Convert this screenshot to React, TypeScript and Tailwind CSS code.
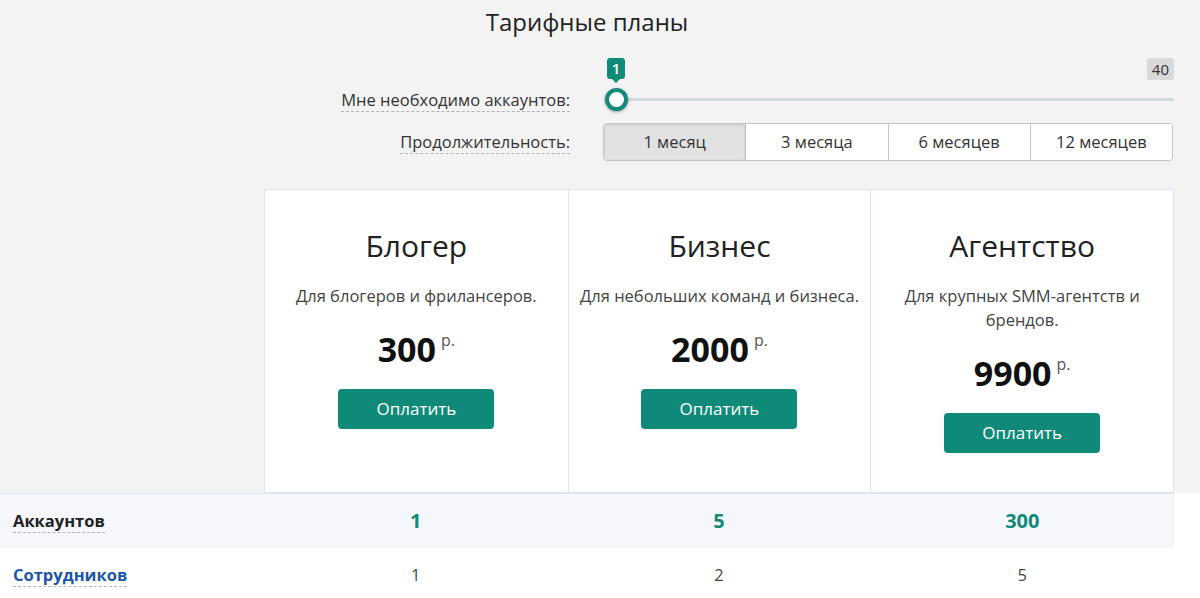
import { useState } from 'react'

const plans = [
  { name: 'Блогер', desc: 'Для блогеров и фрилансеров.', price: '300' },
  { name: 'Бизнес', desc: 'Для небольших команд и бизнеса.', price: '2000' },
  { name: 'Агентство', desc: 'Для крупных SMM-агентств и брендов.', price: '9900' },
]

const periods = ['1 месяц', '3 месяца', '6 месяцев', '12 месяцев']

const rows = [
  { label: 'Аккаунтов', values: ['1', '5', '300'], highlight: true },
  { label: 'Сотрудников', values: ['1', '2', '5'], highlight: false },
]

export default function App() {
  const [period, setPeriod] = useState(0)

  return (
    <div className="min-h-screen bg-white text-[#333] font-['Open_Sans',sans-serif]">
      {/* top section */}
      <div className="bg-[#f3f3f3] h-[493px]">
        <div className="w-[1174px]">
          <h1 className="pt-[6px] h-[38px] text-center text-[24px] leading-8 font-normal text-[#222]">
            Тарифные планы
          </h1>

          {/* accounts slider */}
          <div className="mt-[14px] flex h-[58px]">
            <div className="w-[570px] text-right pt-[36px]">
              <span className="text-[16.5px] leading-[21px] border-b border-dashed border-[#b5b5b5]">
                Мне необходимо аккаунтов:
              </span>
            </div>
            <div className="relative ml-[34px] w-[570px]">
              <div className="absolute left-0 right-0 top-[46px] h-[3px] rounded-full bg-[#d3d9e0]" />
              <div className="absolute left-[3px] top-[6px] flex flex-col items-center">
                <div className="w-[18px] h-[21px] rounded-[3px] bg-[#128a78] text-white text-[15px] font-semibold leading-[21px] text-center">
                  1
                </div>
                <div className="w-0 h-0 border-l-[4px] border-r-[4px] border-t-[4px] border-l-transparent border-r-transparent border-t-[#128a78]" />
              </div>
              <div className="absolute left-[1px] top-[36px] w-[23px] h-[23px] rounded-full bg-white border-[4px] border-[#128a78] shadow-[0_1px_3px_rgba(0,0,0,0.35)]" />
              <div className="absolute right-0 top-[6px] h-[22px] px-[5px] rounded-[3px] bg-[#d9d9d9] text-[15px] leading-[22px] text-[#333]">
                40
              </div>
            </div>
          </div>

          {/* duration */}
          <div className="mt-[13px] flex items-center">
            <div className="w-[570px] text-right">
              <span className="text-[16.5px] leading-[21px] border-b border-dashed border-[#b5b5b5]">
                Продолжительность:
              </span>
            </div>
            <div className="ml-[33px] w-[570px] h-[38px] flex rounded-[4px] border border-[#c4c4c4] bg-white overflow-hidden">
              {periods.map((p, i) => (
                <button
                  key={p}
                  onClick={() => setPeriod(i)}
                  className={`flex-1 text-[16.5px] text-[#333] ${i > 0 ? 'border-l border-[#c4c4c4]' : ''} ${
                    period === i ? 'bg-[#e2e2e2] shadow-[inset_0_1px_3px_rgba(0,0,0,0.12)]' : 'bg-white'
                  }`}
                >
                  {p}
                </button>
              ))}
            </div>
          </div>

          {/* plan cards */}
          <div className="mt-[28px] ml-[264px] w-[910px] h-[304px] grid grid-cols-3 border border-[#d8e6f3] bg-white">
            {plans.map((plan, i) => (
              <div
                key={plan.name}
                className={`flex flex-col items-center px-[10px] pt-[36px] text-center ${i > 0 ? 'border-l border-[#d8e6f3]' : ''}`}
              >
                <h2 className="text-[30px] leading-[40px] text-[#222] font-normal">{plan.name}</h2>
                <p className="mt-[18px] text-[16.5px] leading-[24px] text-[#444]">{plan.desc}</p>
                <div className="mt-[21px] flex items-start h-[40px]">
                  <span className="text-[34px] leading-[40px] font-bold text-[#111]">{plan.price}</span>
                  <span className="ml-[5px] mt-[1px] text-[16px] leading-[20px] text-[#555]">р.</span>
                </div>
                <button className="mt-[20px] w-[156px] h-[40px] rounded-[4px] bg-[#0f8a78] text-white text-[17px]">
                  Оплатить
                </button>
              </div>
            ))}
          </div>
        </div>
      </div>

      {/* features table */}
      <div className="w-[1174px] border-t border-[#dde6f2]">
        {rows.map((row) => (
          <div key={row.label} className={`flex h-[54px] items-center ${row.highlight ? 'bg-[#f6f7fd]' : 'bg-white'}`}>
            <div className="w-[264px] pl-[13px]">
              <span
                className={`text-[16.5px] font-bold leading-[21px] border-b border-dashed border-[#b5b5b5] ${
                  row.highlight ? 'text-[#222]' : 'text-[#1c56a5]'
                }`}
              >
                {row.label}
              </span>
            </div>
            {row.values.map((v, j) => (
              <div
                key={j}
                className={`flex-1 text-center ${
                  row.highlight ? 'text-[20px] font-bold text-[#138a78]' : 'text-[16.5px] text-[#444]'
                }`}
              >
                {v}
              </div>
            ))}
          </div>
        ))}
      </div>
    </div>
  )
}
